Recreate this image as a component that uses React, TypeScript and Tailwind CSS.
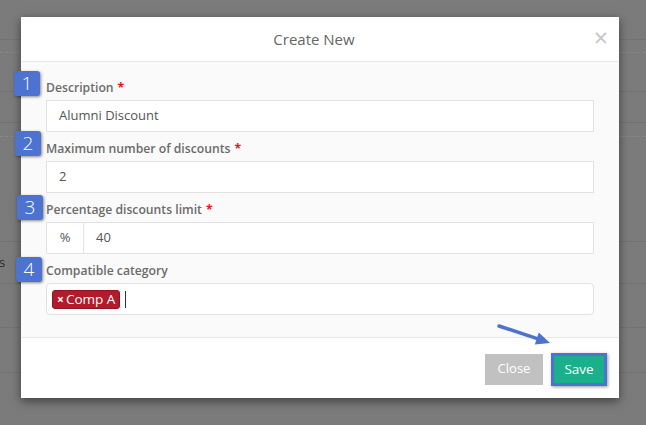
import { ReactNode } from 'react'

function Badge({ n, className }: { n: number; className: string }) {
  return (
    <div
      className={`absolute w-[26px] h-[25px] rounded-[3px] bg-[#4b73cf] text-white text-[19px] leading-[25px] text-center font-light shadow-[1px_1px_3px_rgba(0,0,0,0.45)] ${className}`}
    >
      {n}
    </div>
  )
}

function Field({ label, required, badge, badgeClass, children, className = '' }: {
  label: string
  required?: boolean
  badge: number
  badgeClass: string
  children: ReactNode
  className?: string
}) {
  return (
    <div className={`relative ${className}`}>
      <Badge n={badge} className={badgeClass} />
      <div className="h-[18px] leading-[18px] text-[12.2px] font-semibold text-[#6b6b6b]">
        {label}
        {required && <span className="text-[#e3151a] font-bold ml-[4px]">*</span>}
      </div>
      <div className="mt-[3px]">{children}</div>
    </div>
  )
}

function TextBox({ value }: { value: string }) {
  return (
    <div className="h-[32px] border border-[#e2e2e2] bg-white px-[12px] flex items-center text-[13px] text-[#555]">
      {value}
    </div>
  )
}

export default function App() {
  return (
    <div className="relative w-[646px] h-[425px] overflow-hidden bg-[#7b7b7b] font-['Open_Sans',sans-serif]">
      {/* page behind the backdrop */}
      <div>
        <div className="h-[40px] border-b border-[#727272]" />
        <div className="h-[13px] border-b border-dotted border-[#8c8c8c]" />
        <div className="h-[39px] border-b border-[#727272]" />
        <div className="h-[31px] border-b border-[#727272]" />
        <div className="h-[14px] border-b border-dotted border-[#8c8c8c]" />
        <div className="h-[105px] border-b border-[#727272]" />
        <div className="h-[42px] border-b border-[#727272] flex items-center">
          <span className="text-[13px] text-[#2c2c2c] -ml-[1px]">s</span>
        </div>
        <div className="h-[44px] border-b border-[#727272]" />
        <div className="h-[45px] border-b border-[#727272]" />
      </div>

      {/* modal */}
      <div className="absolute left-[21px] top-[17px] w-[598px] h-[381px] bg-white shadow-[0_3px_9px_rgba(0,0,0,0.5)] flex flex-col">
        <div className="relative h-[45px] border-b border-[#e8e8e8] flex items-center justify-center pr-[12px]">
          <span className="text-[15px] text-[#666]">Create New</span>
          <span className="absolute right-[11px] top-[8px] text-[25px] leading-[25px] text-[#c4c4c4]">×</span>
        </div>

        <div className="h-[275px] bg-[#fafafa] px-[25px] pt-[17px] flex flex-col gap-[8px]">
          <Field label="Description" required badge={1} badgeClass="left-[-32px] top-[-8px]">
            <TextBox value="Alumni Discount" />
          </Field>
          <Field label="Maximum number of discounts" required badge={2} badgeClass="left-[-31px] top-[-9px]">
            <TextBox value="2" />
          </Field>
          <Field label="Percentage discounts limit" required badge={3} badgeClass="left-[-29px] top-[-6px]">
            <div className="h-[32px] border border-[#e2e2e2] bg-white flex items-center text-[13px] text-[#555]">
              <div className="w-[37px] h-full border-r border-[#e2e2e2] flex items-center justify-center">%</div>
              <div className="pl-[12px]">40</div>
            </div>
          </Field>
          <Field label="Compatible category" badge={4} badgeClass="left-[-30px] top-[-5px]">
            <div className="h-[32px] border border-[#e2e2e2] rounded-[4px] bg-white flex items-center pl-[5px] gap-[5px]">
              <span className="h-[19px] px-[4px] rounded-[3px] bg-[#b31a2b] border border-[#8e1420] text-white text-[13.5px] leading-[17px] flex items-center gap-[2px]">
                <span className="text-[12px] font-bold">×</span>Comp A
              </span>
              <span className="w-px h-[17px] bg-[#333]" />
            </div>
          </Field>
        </div>

        <div className="flex-1 border-t border-[#e8e8e8] flex items-center justify-end pr-[12px] gap-[8px] pt-[2px]">
          <button className="w-[58px] h-[31px] bg-[#c1c1c1] text-white text-[13px]">Close</button>
          <div className="w-[56px] h-[33px] border-[3px] border-[#4b73cf] bg-[#1bb08b] text-white text-[13.5px] flex items-center justify-center shadow-[1px_1px_3px_rgba(0,0,0,0.4)]">
            Save
          </div>
        </div>
      </div>

      {/* annotation arrow */}
      <svg className="absolute left-[495px] top-[320px]" width="60" height="30" viewBox="0 0 60 30">
        <line x1="4" y1="6" x2="43" y2="18.8" stroke="#4b73cf" strokeWidth="3.5" strokeLinecap="round" />
        <polygon points="55,23 39.8,24.6 43.8,12.6" fill="#4b73cf" />
      </svg>
    </div>
  )
}
